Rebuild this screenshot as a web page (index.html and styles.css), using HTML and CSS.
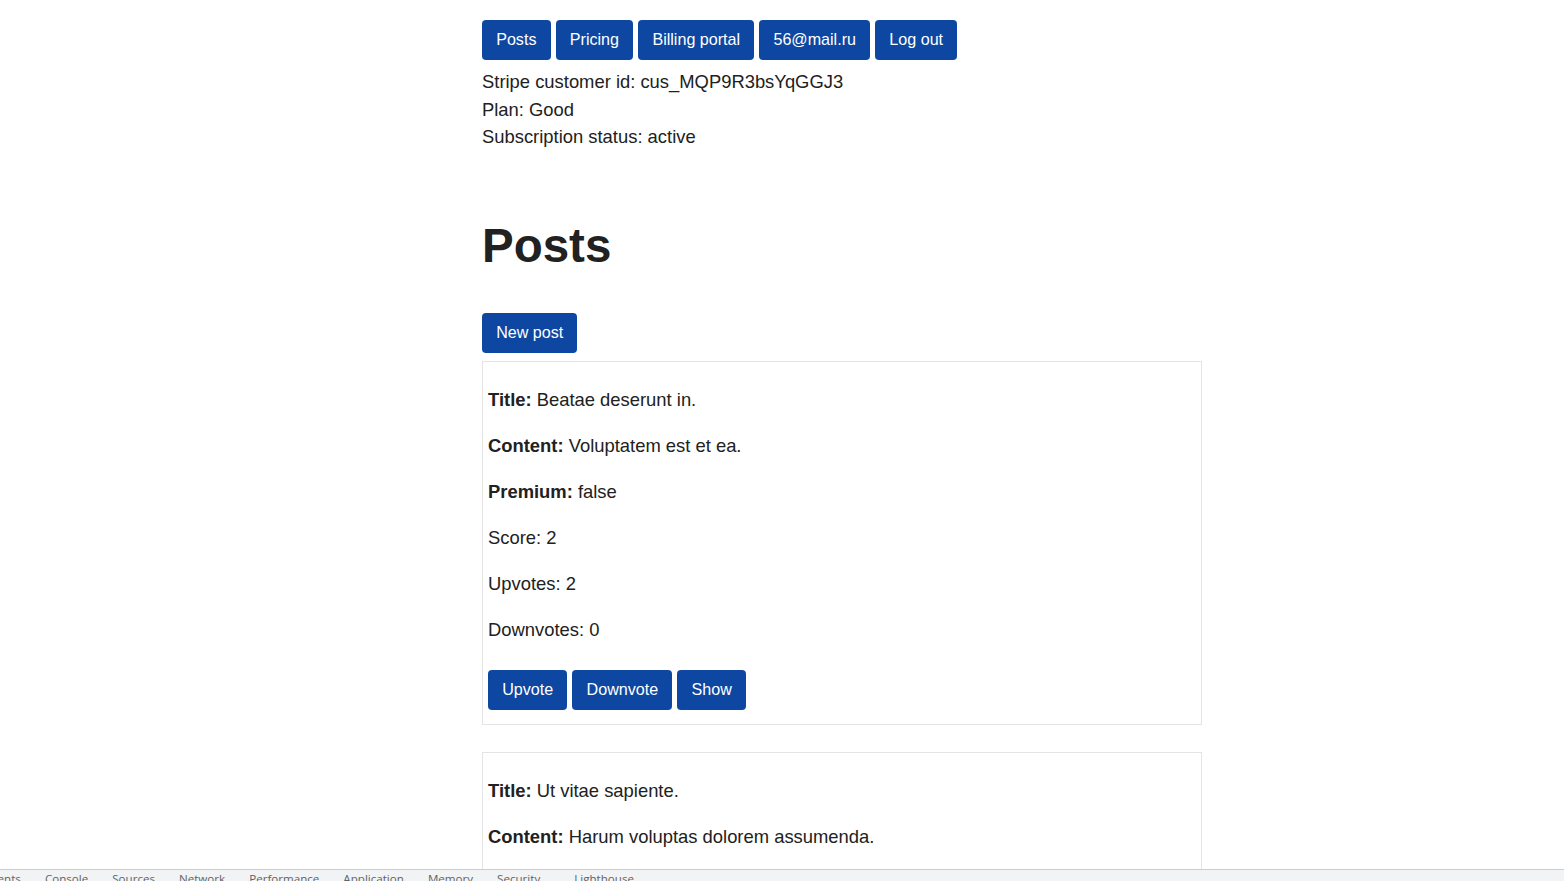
FILE: index.html
```html
<!DOCTYPE html>
<html lang="en">
<head>
<meta charset="utf-8">
<title>Posts</title>
<link rel="stylesheet" href="styles.css">
</head>
<body>
<div class="page">
  <nav class="nav">
    <a class="btn" href="#">Posts</a>
    <a class="btn" href="#">Pricing</a>
    <a class="btn" href="#">Billing portal</a>
    <a class="btn" href="#">56@mail.ru</a>
    <a class="btn" href="#">Log out</a>
  </nav>
  <div class="account">
    <div>Stripe customer id: cus_MQP9R3bsYqGGJ3</div>
    <div>Plan: Good</div>
    <div>Subscription status: active</div>
  </div>

  <h1 class="title">Posts</h1>

  <div class="new"><a class="btn" href="#">New post</a></div>

  <div class="card">
    <p><strong>Title:</strong> Beatae deserunt in.</p>
    <p><strong>Content:</strong> Voluptatem est et ea.</p>
    <p><strong>Premium:</strong> false</p>
    <p>Score: 2</p>
    <p>Upvotes: 2</p>
    <p>Downvotes: 0</p>
    <div class="actions">
      <button class="btn" type="button">Upvote</button>
      <button class="btn" type="button">Downvote</button>
      <a class="btn" href="#">Show</a>
    </div>
  </div>

  <div class="card">
    <p><strong>Title:</strong> Ut vitae sapiente.</p>
    <p><strong>Content:</strong> Harum voluptas dolorem assumenda.</p>
    <p><strong>Premium:</strong> false</p>
    <p>Score: 0</p>
  </div>
</div>

<div class="devtools">
  <span class="tab first">Elements</span>
  <span class="tab">Console</span>
  <span class="tab">Sources</span>
  <span class="tab">Network</span>
  <span class="tab">Performance</span>
  <span class="tab">Application</span>
  <span class="tab">Memory</span>
  <span class="tab">Security</span>
  <span class="tab light">Lighthouse</span>
</div>
</body>
</html>
```

FILE: styles.css
```css
html, body {
  margin: 0;
  padding: 0;
  background: #ffffff;
}

body {
  font-family: "Liberation Sans", Arial, sans-serif;
  font-size: 18.4px;
  line-height: 27.6px;
  color: #212121;
  overflow: hidden;
  height: 881px;
}

.page {
  width: 720px;
  margin-left: 482px;
  padding-top: 20px;
}

.nav {
  display: flex;
  gap: 5px;
  margin-bottom: 8px;
}

.btn {
  display: inline-block;
  box-sizing: border-box;
  height: 40px;
  padding: 7px 14.2px 9px;
  border: 0;
  border-radius: 4px;
  background: #0d47a1;
  color: #ffffff;
  font-family: "Liberation Sans", Arial, sans-serif;
  font-size: 16.1px;
  line-height: 24px;
  text-decoration: none;
  cursor: pointer;
}

.account {
  margin: 0;
}

.title {
  font-size: 47.5px;
  line-height: 56px;
  font-weight: 700;
  margin: 67px 0 39px;
  color: #212121;
}

.new {
  display: flex;
  margin-bottom: 8px;
}

.card {
  border: 1px solid #e4e4e4;
  padding: 6px 5px 5px;
  margin-bottom: 27px;
}

.card p {
  margin: 18.4px 0;
}

.card strong {
  font-weight: 700;
}

.actions {
  display: flex;
  gap: 5px;
  margin: 26px 0 9px;
}

.devtools {
  position: fixed;
  left: 0;
  right: 0;
  bottom: 0;
  height: 11px;
  border-top: 1px solid #cbcdd1;
  background: #f1f3f4;
  display: flex;
  align-items: flex-start;
  overflow: hidden;
  font-family: "Open Sans", "DejaVu Sans", sans-serif;
  font-size: 11.6px;
  line-height: 16px;
  color: #5f6368;
}

.tab {
  display: block;
  padding: 0 12px;
  margin-top: 1px;
  white-space: nowrap;
}

.tab.first {
  margin-left: -41px;
}

.tab.light {
  margin-left: 10px;
}
```
